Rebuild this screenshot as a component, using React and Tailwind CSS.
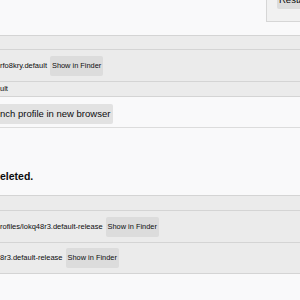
import React from "react";

function FinderBtn() {
  return (
    <button className="h-[20px] px-[2px] rounded-[2px] bg-[#dcdcdc] text-[7.4px] leading-none text-[#0c0c0d] whitespace-nowrap">
      Show in Finder
    </button>
  );
}

export default function App() {
  return (
    <div className="w-[300px] h-[300px] overflow-hidden bg-[#f9f9fa] text-[#0c0c0d] font-['Liberation_Sans',Arial,sans-serif]">
      {/* top area with restart button */}
      <div className="h-[35px] flex justify-end items-start">
        <div className="w-[34px] h-[22px] border-l border-b border-[#d6d6d6] bg-[#f1f1f1] pl-[10px]">
          <div className="h-[9px] overflow-hidden bg-[#dcdcdc] pl-[2px] rounded-bl-[2px]">
            <span className="block text-[9.5px] leading-[10px] -mt-[5px] whitespace-nowrap">Restart</span>
          </div>
        </div>
      </div>

      {/* table 1 */}
      <div className="border-t border-[#d4d4d4] bg-[#ebebeb]">
        <div className="h-[14px] border-b border-[#d4d4d4]"></div>
        <div className="h-[32px] border-b border-[#d4d4d4] flex items-center gap-[3px]">
          <span className="text-[7.5px] whitespace-nowrap">rfo8kry.default</span>
          <FinderBtn />
        </div>
        <div className="h-[15px] border-b border-[#d4d4d4] flex items-center">
          <span className="text-[7.5px] whitespace-nowrap">ult</span>
        </div>
      </div>

      {/* launch section */}
      <div className="h-[31px] pt-[3px] border-b border-[#dcdcdc]">
        <button className="h-[20px] pr-[3px] rounded-r-[2px] bg-[#e2e2e2] text-[9.5px] leading-none whitespace-nowrap">
          nch profile in new browser
        </button>
      </div>

      {/* heading */}
      <div className="h-[67px] pt-[42px]">
        <div className="text-[10.5px] leading-[13px] font-bold whitespace-nowrap">eleted.</div>
      </div>

      {/* table 2 */}
      <div className="border-t border-[#d4d4d4] bg-[#ebebeb]">
        <div className="h-[15px] border-b border-[#d4d4d4]"></div>
        <div className="h-[32px] border-b border-[#d4d4d4] flex items-center gap-[3px]">
          <span className="text-[7.5px] whitespace-nowrap">rofiles/lokq48r3.default-release</span>
          <FinderBtn />
        </div>
        <div className="h-[31px] border-b border-[#d4d4d4] flex items-center gap-[3px]">
          <span className="text-[7.5px] whitespace-nowrap">8r3.default-release</span>
          <FinderBtn />
        </div>
      </div>
    </div>
  );
}
